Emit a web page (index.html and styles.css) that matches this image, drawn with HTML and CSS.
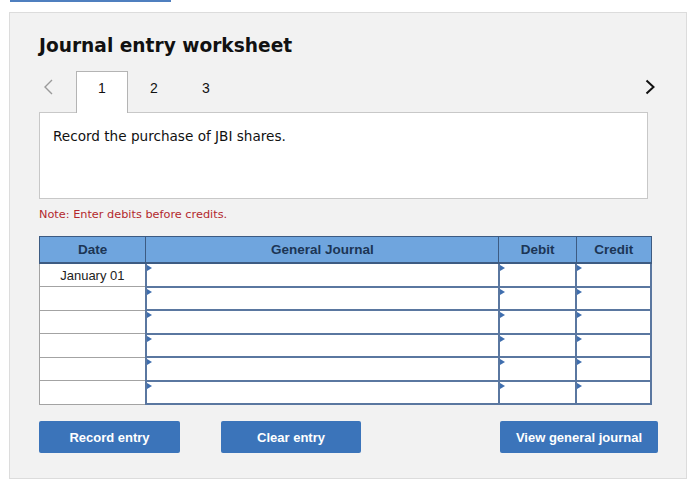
FILE: index.html
```html
<!DOCTYPE html>
<html lang="en">
<head>
    <meta charset="UTF-8">
    <meta name="viewport" content="width=device-width, initial-scale=1.0">
    <title>Journal entry worksheet</title>
    <link rel="stylesheet" href="styles.css">
</head>
<body>
    <div class="top-button"></div>
    <div class="panel">
        <h1 class="title">Journal entry worksheet</h1>

        <!-- tabs -->
        <div class="tab-row">
            <span class="arrow arrow-left">
                <svg width="9" height="16" viewBox="0 0 9 16"><polyline points="8,1 1,8 8,15" fill="none" stroke="#9a9a9a" stroke-width="1.4"/></svg>
            </span>
            <div class="tab active">1</div>
            <div class="tab">2</div>
            <div class="tab">3</div>
            <span class="arrow arrow-right">
                <svg width="10" height="16" viewBox="0 0 10 16"><polyline points="1.5,1.5 8.5,8 1.5,14.5" fill="none" stroke="#111" stroke-width="2"/></svg>
            </span>
        </div>
        <div class="question">
            <p class="question-text">Record the purchase of JBI shares.</p>
        </div>

        <p class="note">Note: Enter debits before credits.</p>

        <table class="journal">
            <tr>
                <th class="col-date">Date</th>
                <th class="col-journal">General Journal</th>
                <th class="col-debit">Debit</th>
                <th class="col-credit">Credit</th>
            </tr>
            <tr>
                <td class="date-cell">January 01</td>
                <td class="input-cell"></td>
                <td class="input-cell"></td>
                <td class="input-cell"></td>
            </tr>
            <tr>
                <td class="date-cell"></td>
                <td class="input-cell"></td>
                <td class="input-cell"></td>
                <td class="input-cell"></td>
            </tr>
            <tr>
                <td class="date-cell"></td>
                <td class="input-cell"></td>
                <td class="input-cell"></td>
                <td class="input-cell"></td>
            </tr>
            <tr>
                <td class="date-cell"></td>
                <td class="input-cell"></td>
                <td class="input-cell"></td>
                <td class="input-cell"></td>
            </tr>
            <tr>
                <td class="date-cell"></td>
                <td class="input-cell"></td>
                <td class="input-cell"></td>
                <td class="input-cell"></td>
            </tr>
            <tr>
                <td class="date-cell"></td>
                <td class="input-cell"></td>
                <td class="input-cell"></td>
                <td class="input-cell"></td>
            </tr>
        </table>

        <div class="button-row">
            <button class="action-button record">Record entry</button>
            <button class="action-button clear">Clear entry</button>
            <button class="action-button view">View general journal</button>
        </div>
    </div>
</body>
</html>
```

FILE: styles.css
```css
body{
    margin: 0;
    background-color: white;
    font-family: "DejaVu Sans", Verdana, sans-serif;
    color: #111;
}
.top-button{
    width: 161px;
    height: 2px;
    margin-left: 10px;
    background-color: #4f7fbf;
}
.panel{
    box-sizing: border-box;
    width: 678px;
    height: 467px;
    margin: 10px 0 0 9px;
    padding: 0 0 0 29px;
    background-color: #f2f2f2;
    border: 1px solid #dcdcdc;
}
.title{
    margin: 21px 0 0 0;
    font-size: 18.6px;
    line-height: 23px;
    font-weight: bold;
}
.tab-row{
    display: flex;
    align-items: flex-start;
    width: 616px;
    margin-top: 14px;
    height: 41px;
    font-family: "Liberation Sans", Arial, sans-serif;
    font-size: 14px;
}
.arrow{
    display: flex;
    margin-top: 8px;
}
.arrow-left{
    width: 37px;
    padding-left: 5px;
    box-sizing: border-box;
}
.arrow-right{
    margin-left: auto;
}
.tab{
    box-sizing: border-box;
    width: 52px;
    height: 41px;
    display: flex;
    justify-content: center;
    padding-top: 9px;
}
.tab.active{
    background-color: white;
    border: 1px solid #b4b4b4;
    border-bottom: none;
    height: 42px;
    margin-bottom: -1px;
    position: relative;
    z-index: 1;
    padding-top: 8px;
}
.question{
    box-sizing: border-box;
    width: 609px;
    height: 87px;
    background-color: white;
    border: 1px solid #c8c8c8;
    padding: 15px 13px;
}
.question-text{
    margin: 0;
    font-size: 13.6px;
    line-height: 16px;
}
.note{
    margin: 9px 0 0 0;
    font-size: 11.3px;
    line-height: 14px;
    color: #b3282d;
}
.journal{
    margin-top: 14px;
    width: 613px;
    border-collapse: collapse;
    font-family: "Liberation Sans", Arial, sans-serif;
    font-size: 13px;
}
.journal th{
    height: 25px;
    padding: 0;
    background-color: #6fa5de;
    color: #1c3555;
    font-size: 13.5px;
    font-weight: bold;
    border: 1px solid #3d5b82;
    border-bottom: 2px solid #3d5b82;
}
.col-date{ width: 106px; }
.col-journal{ width: 356px; }
.col-debit{ width: 77px; }
.col-credit{ width: 74px; }
.journal td{
    height: 21.5px;
    padding: 0;
    background-color: white;
}
.date-cell{
    text-align: center;
    border: 1px solid #a3a3a3;
    color: #222;
}
.input-cell{
    position: relative;
    border: 2px solid #5a77a0;
}
.input-cell::before{
    content: "";
    position: absolute;
    left: 0;
    top: 1px;
    border-top: 3px solid transparent;
    border-bottom: 3px solid transparent;
    border-left: 5px solid #3f6eae;
}
.button-row{
    display: flex;
    width: 619px;
    margin-top: 16px;
}
.action-button{
    height: 32px;
    border: none;
    border-radius: 2px;
    background-color: #3b74ba;
    color: white;
    font-family: "Liberation Sans", Arial, sans-serif;
    font-size: 13px;
    font-weight: bold;
    cursor: pointer;
}
.record{
    width: 141px;
}
.clear{
    width: 140px;
    margin-left: 41px;
}
.view{
    width: 158px;
    margin-left: auto;
}
```
